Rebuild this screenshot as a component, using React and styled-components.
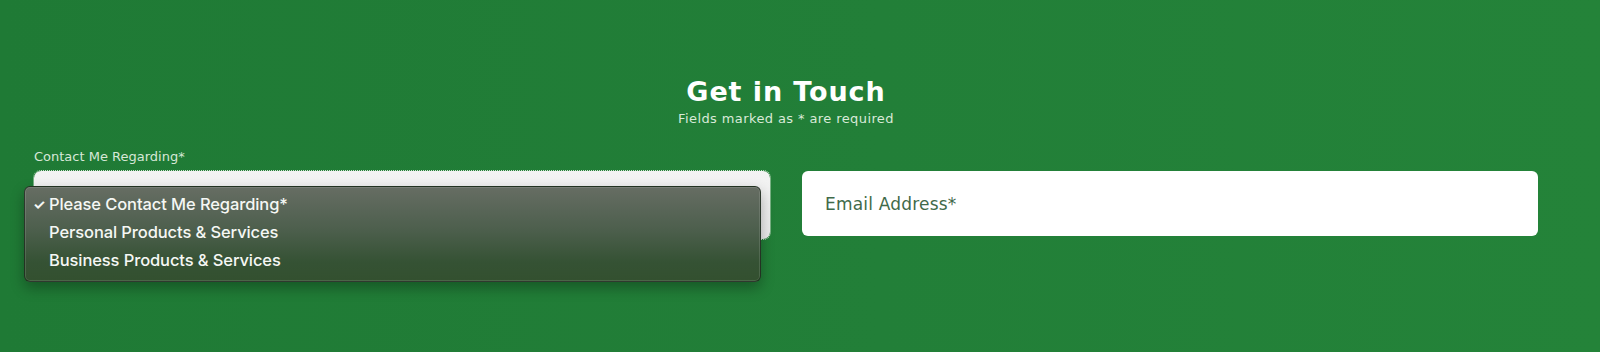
import React from 'react';
import styled, { createGlobalStyle } from 'styled-components';

const GlobalStyle = createGlobalStyle`
  html, body {
    margin: 0;
    padding: 0;
  }
  body {
    font-family: "DejaVu Sans", "Open Sans", sans-serif;
    background: #227d37;
  }
`;

const Section = styled.section`
  height: 352px;
  box-sizing: border-box;
  padding: 74px 62px 0 34px;
  background: linear-gradient(90deg, #1f7a35 0%, #227f38 55%, #248339 100%);
`;

const Heading = styled.header`
  display: flex;
  flex-direction: column;
  align-items: center;
  color: #ffffff;
  margin-bottom: 23px;
`;

const Title = styled.h2`
  margin: 0;
  font-size: 27px;
  line-height: 36px;
  font-weight: 700;
  letter-spacing: 0.9px;
`;

const Subtitle = styled.p`
  margin: 1px 0 0;
  font-size: 13px;
  line-height: 15px;
  letter-spacing: 0.4px;
  color: #d9ead9;
`;

const FormRow = styled.div`
  display: grid;
  grid-template-columns: 1fr 1fr;
  column-gap: 32px;
  align-items: end;
`;

const Field = styled.div`
  display: flex;
  flex-direction: column;
  margin-bottom: ${(p) => p.$lift || 0}px;
`;

const Label = styled.label`
  font-size: 13px;
  line-height: 15px;
  color: #d7e8d8;
  margin-bottom: 7px;
`;

const SelectWrap = styled.div`
  position: relative;
`;

const SelectBox = styled.div`
  height: 68px;
  box-sizing: border-box;
  border-radius: 7px;
  background: linear-gradient(180deg, #f3f3f3 0%, #ebebeb 100%);
  outline: 1px dotted #cfe3cf;
  outline-offset: 0;
`;

const Menu = styled.ul`
  position: absolute;
  left: -10px;
  top: 15px;
  width: 737px;
  height: 96px;
  margin: 0;
  padding: 3px 0 0;
  box-sizing: border-box;
  list-style: none;
  border-radius: 6px;
  border: 1px solid rgba(30, 40, 30, 0.75);
  box-shadow: inset 0 0 0 1px rgba(255, 255, 255, 0.12), 0 6px 14px rgba(0, 0, 0, 0.3);
  background: linear-gradient(180deg, #666d63 0%, #4d5f4d 45%, #355234 80%, #33502f 100%);
  font-family: "Inter", "Liberation Sans", sans-serif;
`;

const Option = styled.li`
  display: flex;
  align-items: center;
  height: 28px;
  padding-left: 8px;
  font-size: 16.5px;
  font-weight: 500;
  color: #f5f7f4;
  letter-spacing: -0.1px;
`;

const Check = styled.span`
  width: 16px;
  font-size: 14px;
  font-weight: 700;
  visibility: ${(p) => (p.$on ? 'visible' : 'hidden')};
`;

const Input = styled.input`
  height: 65px;
  box-sizing: border-box;
  border: none;
  border-radius: 6px;
  background: #ffffff;
  padding: 0 23px;
  font-family: "DejaVu Sans", "Open Sans", sans-serif;
  font-size: 17px;
  letter-spacing: 0.2px;
  outline: none;

  &::placeholder {
    color: #3f6a49;
  }
`;

const options = [
  'Please Contact Me Regarding*',
  'Personal Products & Services',
  'Business Products & Services',
];

export default function App() {
  return (
    <>
      <GlobalStyle />
      <Section>
        <Heading>
          <Title>Get in Touch</Title>
          <Subtitle>Fields marked as * are required</Subtitle>
        </Heading>
        <FormRow>
          <Field>
            <Label>Contact Me Regarding*</Label>
            <SelectWrap>
              <SelectBox />
              <Menu>
                {options.map((o, i) => (
                  <Option key={o}>
                    <Check $on={i === 0}>✓</Check>
                    {o}
                  </Option>
                ))}
              </Menu>
            </SelectWrap>
          </Field>
          <Field $lift={3}>
            <Input placeholder="Email Address*" />
          </Field>
        </FormRow>
      </Section>
    </>
  );
}
